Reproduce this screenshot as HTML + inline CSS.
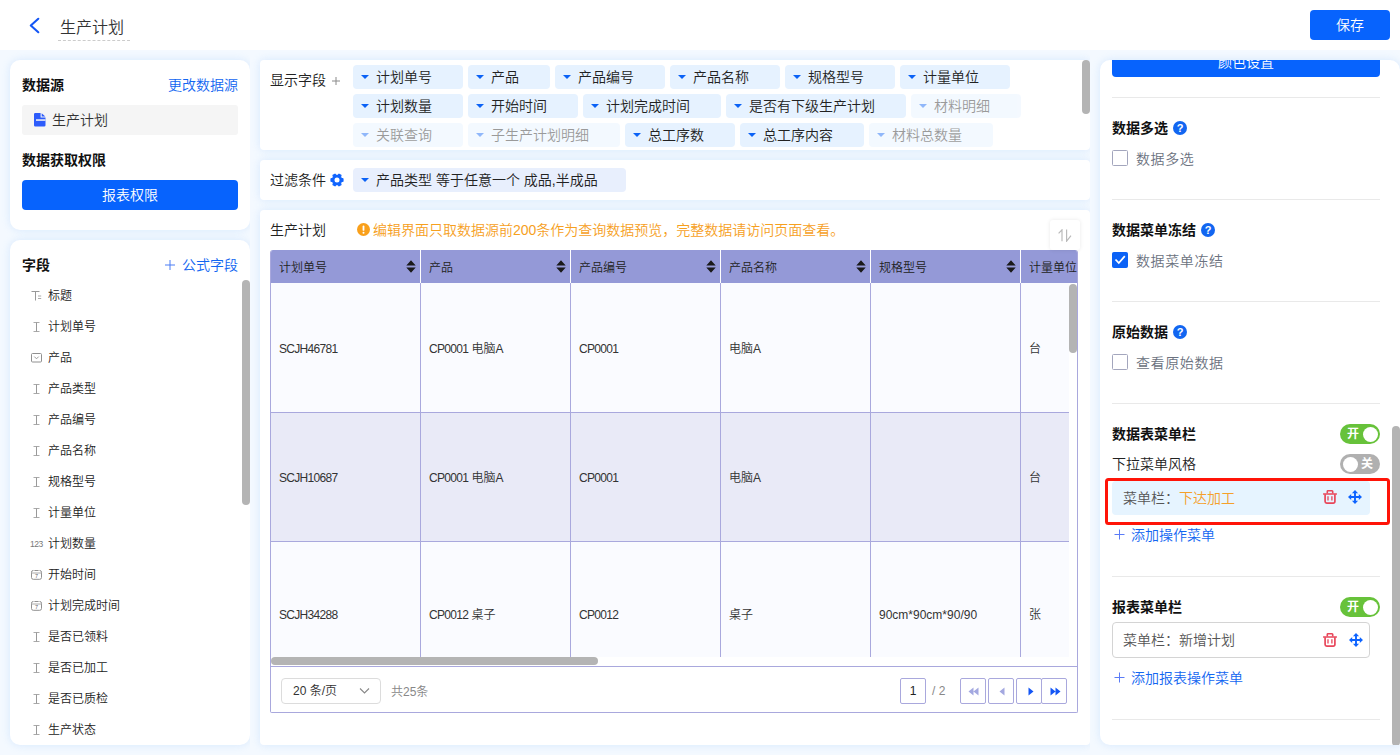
<!DOCTYPE html>
<html lang="zh-CN">
<head>
<meta charset="utf-8">
<title>生产计划</title>
<style>
*{box-sizing:border-box;margin:0;padding:0}
html,body{width:1400px;height:755px;overflow:hidden}
body{position:relative;background:#f4f9ff;font-family:"Liberation Sans","Noto Sans CJK SC",sans-serif;font-size:14px;color:#222;line-height:1;font-weight:350}
.abs{position:absolute}
.hdr{position:absolute;left:0;top:0;width:1400px;height:50px;background:#fff;z-index:5}
.card{position:absolute;background:#fff;border-radius:10px;box-shadow:0 0 9px rgba(150,200,250,.32)}
.b{font-weight:bold;color:#111}
.blue{color:#1266f1}
.t{position:absolute;white-space:nowrap;line-height:20px;height:20px}
.btn{position:absolute;background:#0763fd;color:#fff;border-radius:4px;text-align:center}
.chip{position:absolute;height:24px;line-height:24px;background:#e6f2ff;border-radius:4px;padding-left:23px;white-space:nowrap;font-size:14px;color:#222}
.chip:before{content:"";position:absolute;left:8px;top:10px;border-left:4.7px solid transparent;border-right:4.7px solid transparent;border-top:4.6px solid #0b62f6}
.chip.f{opacity:.45}
.fi{position:absolute;left:38px;font-size:12px;line-height:16px;height:16px;color:#222;white-space:nowrap}
.sb{position:absolute;background:#b4b4b4;border-radius:4px}

.th{position:absolute;top:0;height:33px;line-height:37px;font-size:12px;color:#222;padding-left:8px;border-right:1px solid #fff;white-space:nowrap;overflow:hidden}
.srt{position:absolute;right:4px;top:10px;width:10px;height:13px}
.td{position:absolute;font-size:12px;color:#333;padding-left:8px;white-space:nowrap;border-right:1px solid #a9a8dd;border-bottom:1px solid #a9a8dd;overflow:hidden}
.l{letter-spacing:-.7px}
.pg{position:absolute;top:11px;width:26px;height:26px;border:1px solid #a9a8dd;border-radius:2px;background:#fff}

.hr{position:absolute;left:12px;width:268px;height:1px;background:#e9e9e9}
.help{position:absolute;width:14px;height:14px}
.cb{position:absolute;left:12px;width:16px;height:16px;border:1px solid #a3a6bd;border-radius:1.5px;background:#fff}
.cb.on{background:#0b62f6;border-color:#0b62f6}
.cl{position:absolute;left:36px;white-space:nowrap;line-height:20px;color:#6b7280;letter-spacing:.6px}
.sw{position:absolute;left:240px;width:40px;height:20px;border-radius:10px;color:#fff;font-size:12px;font-weight:bold;line-height:20px}
.sw i{position:absolute;top:2.5px;width:15px;height:15px;border-radius:8px;background:#fff}
.cr{clip-path:inset(-12px 0 -12px -12px)}
</style>
</head>
<body>
<!-- header -->
<div class="hdr">
  <svg class="abs" style="left:28px;top:17px" width="12" height="17" viewBox="0 0 12 17"><path d="M10.3 1.8 L2.8 8.5 L10.3 15.2" fill="none" stroke="#1456f5" stroke-width="2.1" stroke-linecap="round" stroke-linejoin="round"/></svg>
  <div class="t" style="left:60px;top:18px;font-size:16px;color:#333">生产计划</div>
  <div class="abs" style="left:58px;top:40px;width:72px;border-top:1px dashed #ccc"></div>
  <div class="btn" style="left:1310px;top:10px;width:80px;height:30px;line-height:30px;font-size:14px">保存</div>
</div>

<!-- left card 1 -->
<div class="card cr" style="left:10px;top:60px;width:240px;height:170px">
  <div class="t b" style="left:12px;top:15px">数据源</div>
  <div class="t blue" style="right:12px;top:15px">更改数据源</div>
  <div class="abs" style="left:12px;top:45px;width:216px;height:30px;background:#f5f5f5;border-radius:3px">
    <svg class="abs" style="left:11.5px;top:8px" width="12" height="14" viewBox="0 0 12 14"><path d="M1.3 0H6.6V4.6H11.5V12.2a1.3 1.3 0 0 1-1.3 1.3H1.3A1.3 1.3 0 0 1 0 12.2V1.3A1.3 1.3 0 0 1 1.3 0z" fill="#2d5cfb"/><path d="M7.7 0.2L11.3 3.5H7.7z" fill="#2d5cfb"/><rect x="2" y="6.3" width="9.5" height="1.5" fill="#f5f5f5"/></svg>
    <div class="t" style="left:30px;top:5px;color:#333">生产计划</div>
  </div>
  <div class="t b" style="left:12px;top:90px">数据获取权限</div>
  <div class="btn" style="left:12px;top:120px;width:216px;height:30px;line-height:30px">报表权限</div>
</div>

<!-- left card 2 -->
<div class="card cr" id="fields" style="left:10px;top:240px;width:240px;height:505px;overflow:hidden">
  <div class="t b" style="left:12px;top:15px">字段</div>
  <svg class="abs" style="left:155px;top:20px" width="10" height="10" viewBox="0 0 10 10"><path d="M5 0v10M0 5h10" stroke="#4a7df5" stroke-width="1"/></svg><div class="t blue" style="right:12px;top:15px">公式字段</div>
  <svg class="abs" style="left:21px;top:49px" width="13" height="12" viewBox="0 0 13 12"><path d="M0.5 2.5h8M4.5 2.5v9" fill="none" stroke="#999" stroke-width="1"/><path d="M7 7h3.2M7 9.5h3.2" fill="none" stroke="#aaa" stroke-width="1"/></svg>
  <div class="fi" style="top:48px">标题</div>
  <svg class="abs" style="left:21px;top:80px" width="12" height="12" viewBox="0 0 12 12"><path d="M2.5 2.5h6M2.5 11.5h6" fill="none" stroke="#aaa" stroke-width="1"/><path d="M5.5 2.5v9" fill="none" stroke="#999" stroke-width="1"/></svg>
  <div class="fi" style="top:79px">计划单号</div>
  <svg class="abs" style="left:21px;top:111px" width="12" height="12" viewBox="0 0 12 12"><rect x="0.5" y="2.5" width="10" height="8.5" rx="1" fill="none" stroke="#909090"/><path d="M3.3 5.6l2.2 2.2 2.2-2.2" fill="none" stroke="#999" stroke-width="1"/></svg>
  <div class="fi" style="top:110px">产品</div>
  <svg class="abs" style="left:21px;top:142px" width="12" height="12" viewBox="0 0 12 12"><path d="M2.5 2.5h6M2.5 11.5h6" fill="none" stroke="#aaa" stroke-width="1"/><path d="M5.5 2.5v9" fill="none" stroke="#999" stroke-width="1"/></svg>
  <div class="fi" style="top:141px">产品类型</div>
  <svg class="abs" style="left:21px;top:173px" width="12" height="12" viewBox="0 0 12 12"><path d="M2.5 2.5h6M2.5 11.5h6" fill="none" stroke="#aaa" stroke-width="1"/><path d="M5.5 2.5v9" fill="none" stroke="#999" stroke-width="1"/></svg>
  <div class="fi" style="top:172px">产品编号</div>
  <svg class="abs" style="left:21px;top:204px" width="12" height="12" viewBox="0 0 12 12"><path d="M2.5 2.5h6M2.5 11.5h6" fill="none" stroke="#aaa" stroke-width="1"/><path d="M5.5 2.5v9" fill="none" stroke="#999" stroke-width="1"/></svg>
  <div class="fi" style="top:203px">产品名称</div>
  <svg class="abs" style="left:21px;top:235px" width="12" height="12" viewBox="0 0 12 12"><path d="M2.5 2.5h6M2.5 11.5h6" fill="none" stroke="#aaa" stroke-width="1"/><path d="M5.5 2.5v9" fill="none" stroke="#999" stroke-width="1"/></svg>
  <div class="fi" style="top:234px">规格型号</div>
  <svg class="abs" style="left:21px;top:266px" width="12" height="12" viewBox="0 0 12 12"><path d="M2.5 2.5h6M2.5 11.5h6" fill="none" stroke="#aaa" stroke-width="1"/><path d="M5.5 2.5v9" fill="none" stroke="#999" stroke-width="1"/></svg>
  <div class="fi" style="top:265px">计量单位</div>
  <div class="abs" style="left:20px;top:298px;font-size:8.5px;line-height:12px;color:#777;letter-spacing:-.5px;font-weight:400">123</div>
  <div class="fi" style="top:296px">计划数量</div>
  <svg class="abs" style="left:21px;top:328px" width="12" height="12" viewBox="0 0 12 12"><rect x="0.5" y="2.5" width="10" height="8.8" rx="1.8" fill="none" stroke="#909090"/><path d="M0.5 5h10" stroke="#aaa"/><path d="M3 2.2v1.5M8 2.2v1.5" stroke="#fff" stroke-width="1"/><text x="5.5" y="10" font-size="5.5" text-anchor="middle" fill="#666" font-family="Liberation Sans, sans-serif">7</text></svg>
  <div class="fi" style="top:327px">开始时间</div>
  <svg class="abs" style="left:21px;top:359px" width="12" height="12" viewBox="0 0 12 12"><rect x="0.5" y="2.5" width="10" height="8.8" rx="1.8" fill="none" stroke="#909090"/><path d="M0.5 5h10" stroke="#aaa"/><path d="M3 2.2v1.5M8 2.2v1.5" stroke="#fff" stroke-width="1"/><text x="5.5" y="10" font-size="5.5" text-anchor="middle" fill="#666" font-family="Liberation Sans, sans-serif">7</text></svg>
  <div class="fi" style="top:358px">计划完成时间</div>
  <svg class="abs" style="left:21px;top:390px" width="12" height="12" viewBox="0 0 12 12"><path d="M2.5 2.5h6M2.5 11.5h6" fill="none" stroke="#aaa" stroke-width="1"/><path d="M5.5 2.5v9" fill="none" stroke="#999" stroke-width="1"/></svg>
  <div class="fi" style="top:389px">是否已领料</div>
  <svg class="abs" style="left:21px;top:421px" width="12" height="12" viewBox="0 0 12 12"><path d="M2.5 2.5h6M2.5 11.5h6" fill="none" stroke="#aaa" stroke-width="1"/><path d="M5.5 2.5v9" fill="none" stroke="#999" stroke-width="1"/></svg>
  <div class="fi" style="top:420px">是否已加工</div>
  <svg class="abs" style="left:21px;top:452px" width="12" height="12" viewBox="0 0 12 12"><path d="M2.5 2.5h6M2.5 11.5h6" fill="none" stroke="#aaa" stroke-width="1"/><path d="M5.5 2.5v9" fill="none" stroke="#999" stroke-width="1"/></svg>
  <div class="fi" style="top:451px">是否已质检</div>
  <svg class="abs" style="left:21px;top:483px" width="12" height="12" viewBox="0 0 12 12"><path d="M2.5 2.5h6M2.5 11.5h6" fill="none" stroke="#aaa" stroke-width="1"/><path d="M5.5 2.5v9" fill="none" stroke="#999" stroke-width="1"/></svg>
  <div class="fi" style="top:482px">生产状态</div>
  <div class="sb" style="left:232px;top:40px;width:8px;height:225px"></div>
</div>

<!-- middle card A -->
<div class="card cr" id="cardA" style="border-radius:4px;left:260px;top:60px;width:830px;height:90px">
  <div class="t" style="left:10px;top:10px">显示字段</div><svg class="abs" style="left:71.5px;top:16.5px" width="8" height="8" viewBox="0 0 8 8"><path d="M4 0v8M0 4h8" stroke="#8a8a8a" stroke-width="1"/></svg>
  <div class="chip" style="left:93px;top:5px;width:110px">计划单号</div>
  <div class="chip" style="left:208px;top:5px;width:82px">产品</div>
  <div class="chip" style="left:295px;top:5px;width:110px">产品编号</div>
  <div class="chip" style="left:410px;top:5px;width:110px">产品名称</div>
  <div class="chip" style="left:525px;top:5px;width:110px">规格型号</div>
  <div class="chip" style="left:640px;top:5px;width:110px">计量单位</div>
  <div class="chip" style="left:93px;top:34px;width:110px">计划数量</div>
  <div class="chip" style="left:208px;top:34px;width:110px">开始时间</div>
  <div class="chip" style="left:323px;top:34px;width:138px">计划完成时间</div>
  <div class="chip" style="left:466px;top:34px;width:180px">是否有下级生产计划</div>
  <div class="chip f" style="left:651px;top:34px;width:110px">材料明细</div>
  <div class="chip f" style="left:93px;top:63px;width:110px">关联查询</div>
  <div class="chip f" style="left:208px;top:63px;width:152px">子生产计划明细</div>
  <div class="chip" style="left:365px;top:63px;width:110px">总工序数</div>
  <div class="chip" style="left:480px;top:63px;width:124px">总工序内容</div>
  <div class="chip f" style="left:609px;top:63px;width:124px">材料总数量</div>
  <div class="sb" style="left:822px;top:0;width:8px;height:54px"></div>
</div>

<!-- middle card B -->
<div class="card cr" id="cardB" style="border-radius:4px;left:260px;top:160px;width:830px;height:40px">
  <div class="t" style="left:10px;top:10px">过滤条件</div>
  <svg class="abs" style="left:70px;top:13.3px" width="14" height="14" viewBox="0 0 14 14"><path d="M11.44 5.45 L12.99 5.86 L12.99 8.14 L11.44 8.55 L10.56 10.07 L10.99 11.62 L9.01 12.76 L7.88 11.62 L6.12 11.62 L4.99 12.76 L3.01 11.62 L3.44 10.07 L2.56 8.55 L1.01 8.14 L1.01 5.86 L2.56 5.45 L3.44 3.93 L3.01 2.38 L4.99 1.24 L6.12 2.38 L7.88 2.38 L9.01 1.24 L10.99 2.38 L10.56 3.93z" fill="#1064fe" stroke="#1064fe" stroke-width="1.2" stroke-linejoin="round"/><circle cx="7" cy="7" r="2.5" fill="#fff"/></svg>
  <div class="chip" style="left:93px;top:8px;width:273px;background:#e8effd">产品类型 等于任意一个 成品,半成品</div>
</div>

<!-- middle card C -->
<div class="card cr" id="cardC" style="border-radius:4px;left:260px;top:210px;width:830px;height:535px">
  <div class="t" style="left:10px;top:10px">生产计划</div>
  <svg class="abs" style="left:96.5px;top:13px" width="13" height="13" viewBox="0 0 13 13"><circle cx="6.5" cy="6.5" r="6.5" fill="#f9a01b"/><rect x="5.6" y="2.6" width="1.8" height="5.2" rx=".9" fill="#fff"/><circle cx="6.5" cy="9.8" r="1" fill="#fff"/></svg>
  <div class="t" style="left:113px;top:10px;color:#f6a01e">编辑界面只取数据源前200条作为查询数据预览，完整数据请访问页面查看。</div>
  <div class="abs" style="left:790px;top:10px;width:30px;height:30px;background:#fff;border-radius:3px;box-shadow:0 0 4px rgba(0,0,0,.09);z-index:2"><svg class="abs" style="left:8px;top:9.3px" width="14" height="13" viewBox="0 0 14 13"><path d="M0.6 4.4L4 0.8V12.2" fill="none" stroke="#b9b9b9" stroke-width="1.15"/><path d="M8.6 0.5V12.2L13 6.6" fill="none" stroke="#b9b9b9" stroke-width="1.15"/></svg></div>
  <div class="abs" id="tbl" style="left:10px;top:40px;width:808px;height:463px;border-radius:3px 3px 2px 2px;border:1px solid #a9a8dd;border-top:none;overflow:hidden">
    <div class="abs" style="left:0;top:0;width:808px;height:33px;background:#9499d7"></div>
    <div class="th" style="left:-1px;width:151px;padding-left:9px;">计划单号<svg class="srt" viewBox="0 0 10 13"><path d="M5 0.3L9.7 5.4H0.3z M5 12.7L0.3 7.6H9.7z" fill="#1a1a1a"/></svg></div>
    <div class="th" style="left:150px;width:150px;">产品<svg class="srt" viewBox="0 0 10 13"><path d="M5 0.3L9.7 5.4H0.3z M5 12.7L0.3 7.6H9.7z" fill="#1a1a1a"/></svg></div>
    <div class="th" style="left:300px;width:150px;">产品编号<svg class="srt" viewBox="0 0 10 13"><path d="M5 0.3L9.7 5.4H0.3z M5 12.7L0.3 7.6H9.7z" fill="#1a1a1a"/></svg></div>
    <div class="th" style="left:450px;width:150px;">产品名称<svg class="srt" viewBox="0 0 10 13"><path d="M5 0.3L9.7 5.4H0.3z M5 12.7L0.3 7.6H9.7z" fill="#1a1a1a"/></svg></div>
    <div class="th" style="left:600px;width:150px;">规格型号<svg class="srt" viewBox="0 0 10 13"><path d="M5 0.3L9.7 5.4H0.3z M5 12.7L0.3 7.6H9.7z" fill="#1a1a1a"/></svg></div>
    <div class="th" style="left:750px;width:150px;">计量单位</div>
    <div class="abs" style="left:0;top:33px;width:808px;height:130px;background:#fafbff"></div>
    <div class="td" style="left:-1px;top:33px;width:151px;height:130px;line-height:132px;padding-left:9px;"><span class="l">SCJH46781</span></div>
    <div class="td" style="left:150px;top:33px;width:150px;height:130px;line-height:132px;"><span class="l">CP0001</span> 电脑<span class="l">A</span></div>
    <div class="td" style="left:300px;top:33px;width:150px;height:130px;line-height:132px;"><span class="l">CP0001</span></div>
    <div class="td" style="left:450px;top:33px;width:150px;height:130px;line-height:132px;">电脑<span class="l">A</span></div>
    <div class="td" style="left:600px;top:33px;width:150px;height:130px;line-height:132px;"></div>
    <div class="td" style="left:750px;top:33px;width:150px;height:130px;line-height:132px;">台</div>
    <div class="abs" style="left:0;top:163px;width:808px;height:129px;background:#e9eaf7"></div>
    <div class="td" style="left:-1px;top:163px;width:151px;height:129px;line-height:130px;padding-left:9px;"><span class="l">SCJH10687</span></div>
    <div class="td" style="left:150px;top:163px;width:150px;height:129px;line-height:130px;"><span class="l">CP0001</span> 电脑<span class="l">A</span></div>
    <div class="td" style="left:300px;top:163px;width:150px;height:129px;line-height:130px;"><span class="l">CP0001</span></div>
    <div class="td" style="left:450px;top:163px;width:150px;height:129px;line-height:130px;">电脑<span class="l">A</span></div>
    <div class="td" style="left:600px;top:163px;width:150px;height:129px;line-height:130px;"></div>
    <div class="td" style="left:750px;top:163px;width:150px;height:129px;line-height:130px;">台</div>
    <div class="abs" style="left:0;top:292px;width:808px;height:129px;background:#fafbff"></div>
    <div class="td" style="left:-1px;top:292px;width:151px;height:129px;line-height:146px;padding-left:9px;"><span class="l">SCJH34288</span></div>
    <div class="td" style="left:150px;top:292px;width:150px;height:129px;line-height:146px;"><span class="l">CP0012</span> 桌子</div>
    <div class="td" style="left:300px;top:292px;width:150px;height:129px;line-height:146px;"><span class="l">CP0012</span></div>
    <div class="td" style="left:450px;top:292px;width:150px;height:129px;line-height:146px;">桌子</div>
    <div class="td" style="left:600px;top:292px;width:150px;height:129px;line-height:146px;">90cm*90cm*90/90</div>
    <div class="td" style="left:750px;top:292px;width:150px;height:129px;line-height:146px;">张</div>
    <div class="abs" style="left:798px;top:33px;width:10px;height:374px;background:#fff"></div>
    <div class="sb" style="left:798px;top:34px;width:8px;height:69px"></div>
    <div class="abs" style="left:0;top:407px;width:808px;height:9px;background:#fff"></div>
    <div class="sb" style="left:0;top:407px;width:327px;height:8px"></div>
    <div class="abs" style="left:0;top:416px;width:808px;height:47px;background:#fff;border-top:1px solid #a9a8dd">
      <div class="abs" style="left:10px;top:11px;width:100px;height:26px;border:1px solid #dcdcdc;border-radius:4px;font-size:12px;line-height:25px;padding-left:11px;color:#333">20 条/页<svg class="abs" style="right:10px;top:8px" width="11" height="8" viewBox="0 0 11 8"><path d="M1 1.5l4.5 4.5L10 1.5" fill="none" stroke="#888" stroke-width="1.1"/></svg></div>
      <div class="t" style="left:120px;top:15px;font-size:12px;color:#888">共25条</div>
      <div class="pg" style="left:629px;text-align:center;line-height:24px;font-size:12px;color:#222">1</div>
      <div class="t" style="left:661px;top:14px;font-size:12px;color:#888">/ 2</div>
      <div class="pg" style="left:689px;width:26px"><svg class="abs" style="left:7px;top:8px" width="11" height="9" viewBox="0 0 11 9"><path d="M5.5 0.5v8L0.5 4.5z M10.5 0.5v8L5.5 4.5z" fill="#a3a8e0"/></svg></div>
      <div class="pg" style="left:717px;width:26px"><svg class="abs" style="left:10px;top:8px" width="6" height="9" viewBox="0 0 6 9"><path d="M5.5 0.5v8L0.5 4.5z" fill="#a3a8e0"/></svg></div>
      <div class="pg" style="left:745px;width:26px"><svg class="abs" style="left:11px;top:8px" width="6" height="9" viewBox="0 0 6 9"><path d="M0.5 0.5v8L5.5 4.5z" fill="#1456f5"/></svg></div>
      <div class="pg" style="left:770px;width:26px"><svg class="abs" style="left:8px;top:8px" width="11" height="9" viewBox="0 0 11 9"><path d="M0.5 0.5v8L5.5 4.5z M5.5 0.5v8L10.5 4.5z" fill="#1456f5"/></svg></div>
    </div>
  </div>
</div>

<!-- right panel -->
<div class="card" id="right" style="left:1100px;top:60px;width:300px;height:685px;border-radius:10px 10px 0 10px;overflow:hidden">
  <div class="btn" style="left:12px;top:-13px;width:268px;height:30px;line-height:30px">颜色设置</div>
  <div class="hr" style="top:37px"></div>
  <div class="t b" style="left:12px;top:58px">数据多选</div><svg class="help" style="left:73px;top:61px" viewBox="0 0 14 14"><circle cx="7" cy="7" r="7" fill="#1266f1"/><text x="7" y="11" font-size="11" font-weight="bold" text-anchor="middle" fill="#fff" font-family="Liberation Sans, sans-serif">?</text></svg>
  <div class="cb" style="top:90px"></div><div class="cl" style="top:89px">数据多选</div>
  <div class="hr" style="top:139px"></div>
  <div class="t b" style="left:12px;top:160px">数据菜单冻结</div><svg class="help" style="left:101px;top:163px" viewBox="0 0 14 14"><circle cx="7" cy="7" r="7" fill="#1266f1"/><text x="7" y="11" font-size="11" font-weight="bold" text-anchor="middle" fill="#fff" font-family="Liberation Sans, sans-serif">?</text></svg>
  <div class="cb on" style="top:192px"><svg class="abs" style="left:1px;top:2px" width="12" height="10" viewBox="0 0 12 10"><path d="M1.5 4.5l3.3 3.5 6-6.8" fill="none" stroke="#fff" stroke-width="1.8"/></svg></div><div class="cl" style="top:191px">数据菜单冻结</div>
  <div class="hr" style="top:241px"></div>
  <div class="t b" style="left:12px;top:262px">原始数据</div><svg class="help" style="left:73px;top:265px" viewBox="0 0 14 14"><circle cx="7" cy="7" r="7" fill="#1266f1"/><text x="7" y="11" font-size="11" font-weight="bold" text-anchor="middle" fill="#fff" font-family="Liberation Sans, sans-serif">?</text></svg>
  <div class="cb" style="top:294px"></div><div class="cl" style="top:293px">查看原始数据</div>
  <div class="hr" style="top:343px"></div>
  <div class="t b" style="left:12px;top:364px">数据表菜单栏</div>
  <div class="sw" style="top:364px;background:#67c23a;padding-left:7px">开<i style="right:2.5px"></i></div>
  <div class="t" style="left:12px;top:394px">下拉菜单风格</div>
  <div class="sw" style="top:394px;background:#b0b0b0;padding-left:21px">关<i style="left:2.5px"></i></div>
  <div class="abs" style="left:12px;top:421px;width:258px;height:34px;background:#e6f4ff;border-radius:4px"><div class="t" style="left:11px;top:7px;color:#555">菜单栏：<span style="color:#f5a02a">下达加工</span></div><svg class="abs" style="left:211px;top:9px" width="14" height="14" viewBox="0 0 14 14"><path d="M0.1 4h13.8" stroke="#e8465a" stroke-width="1.5"/><path d="M4.3 3.6V1.4a.6.6 0 0 1 .6-.6h4.2a.6.6 0 0 1 .6.6v2.2" fill="none" stroke="#e8465a" stroke-width="1.6"/><path d="M2.1 4.2v7.3a1.6 1.6 0 0 0 1.6 1.6h6.6a1.6 1.6 0 0 0 1.6-1.6V4.2" fill="none" stroke="#e8465a" stroke-width="1.7"/><path d="M5 6.3v4.2M8.9 6.3v4.2" stroke="#e8465a" stroke-width="1.3"/></svg><svg class="abs" style="left:236px;top:8.7px" width="14" height="14" viewBox="0 0 14 14"><path d="M7 1.5v11M1.5 7h11" stroke="#0d63ff" stroke-width="1.9"/><path d="M7 0L10.1 3.2H3.9z M7 14L3.9 10.8h6.2z M0 7l3.2-3.1v6.2z M14 7l-3.2 3.1V3.9z" fill="#0d63ff"/></svg></div>
  <div class="abs" style="left:5px;top:418px;width:285px;height:47px;border:3px solid #ff1408;border-radius:3.5px"></div>
<svg class="abs" style="left:14px;top:469px" width="11" height="11" viewBox="0 0 11 11"><path d="M5.5 0.5v10M0.5 5.5h10" stroke="#5b7cf7" stroke-width="1"/></svg><div class="t blue" style="left:31px;top:465px">添加操作菜单</div>
  <div class="hr" style="top:516px"></div>
  <div class="t b" style="left:12px;top:537px">报表菜单栏</div>
  <div class="sw" style="top:537px;background:#67c23a;padding-left:7px">开<i style="right:2.5px"></i></div>
  <div class="abs" style="left:12px;top:562px;width:258px;height:36px;border:1px solid #d4d4d4;border-radius:4px"><div class="t" style="left:10px;top:7px;color:#555">菜单栏：新增计划</div><svg class="abs" style="left:210px;top:10px" width="14" height="14" viewBox="0 0 14 14"><path d="M0.1 4h13.8" stroke="#e8465a" stroke-width="1.5"/><path d="M4.3 3.6V1.4a.6.6 0 0 1 .6-.6h4.2a.6.6 0 0 1 .6.6v2.2" fill="none" stroke="#e8465a" stroke-width="1.6"/><path d="M2.1 4.2v7.3a1.6 1.6 0 0 0 1.6 1.6h6.6a1.6 1.6 0 0 0 1.6-1.6V4.2" fill="none" stroke="#e8465a" stroke-width="1.7"/><path d="M5 6.3v4.2M8.9 6.3v4.2" stroke="#e8465a" stroke-width="1.3"/></svg><svg class="abs" style="left:235.5px;top:9.7px" width="14" height="14" viewBox="0 0 14 14"><path d="M7 1.5v11M1.5 7h11" stroke="#0d63ff" stroke-width="1.9"/><path d="M7 0L10.1 3.2H3.9z M7 14L3.9 10.8h6.2z M0 7l3.2-3.1v6.2z M14 7l-3.2 3.1V3.9z" fill="#0d63ff"/></svg></div>
<svg class="abs" style="left:14px;top:612px" width="11" height="11" viewBox="0 0 11 11"><path d="M5.5 0.5v10M0.5 5.5h10" stroke="#5b7cf7" stroke-width="1"/></svg><div class="t blue" style="left:31px;top:608px">添加报表操作菜单</div>
  <div class="hr" style="top:659px"></div>
  <div class="sb" style="left:292px;top:366px;width:8px;height:320px;border-radius:4px 4px 4px 4px"></div>
</div>
</body>
</html>
